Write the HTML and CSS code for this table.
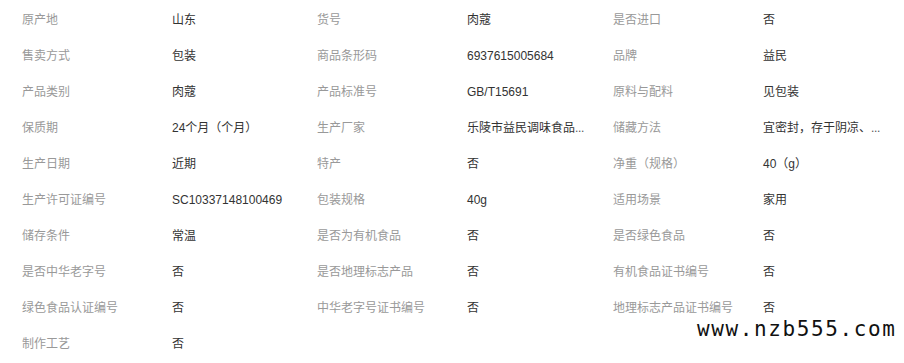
FILE: index.html
```html
<!DOCTYPE html>
<html lang="zh-CN">
<head>
<meta charset="utf-8">
<title>产品参数</title>
<link rel="stylesheet" href="styles.css">
</head>
<body>
<div class="params">
  <span class="k">原产地</span><span class="v">山东</span>
  <span class="k">货号</span><span class="v">肉蔻</span>
  <span class="k">是否进口</span><span class="v">否</span>

  <span class="k">售卖方式</span><span class="v">包装</span>
  <span class="k">商品条形码</span><span class="v">6937615005684</span>
  <span class="k">品牌</span><span class="v">益民</span>

  <span class="k">产品类别</span><span class="v">肉蔻</span>
  <span class="k">产品标准号</span><span class="v">GB/T15691</span>
  <span class="k">原料与配料</span><span class="v">见包装</span>

  <span class="k">保质期</span><span class="v">24个月（个月）</span>
  <span class="k">生产厂家</span><span class="v" title="乐陵市益民调味食品有限公司">乐陵市益民调味食品<span class="dots">...</span></span>
  <span class="k">储藏方法</span><span class="v" title="宜密封，存于阴凉、干燥处">宜密封，存于阴凉、<span class="dots">...</span></span>

  <span class="k">生产日期</span><span class="v">近期</span>
  <span class="k">特产</span><span class="v">否</span>
  <span class="k">净重（规格）</span><span class="v">40（g）</span>

  <span class="k">生产许可证编号</span><span class="v">SC10337148100469</span>
  <span class="k">包装规格</span><span class="v">40g</span>
  <span class="k">适用场景</span><span class="v">家用</span>

  <span class="k">储存条件</span><span class="v">常温</span>
  <span class="k">是否为有机食品</span><span class="v">否</span>
  <span class="k">是否绿色食品</span><span class="v">否</span>

  <span class="k">是否中华老字号</span><span class="v">否</span>
  <span class="k">是否地理标志产品</span><span class="v">否</span>
  <span class="k">有机食品证书编号</span><span class="v">否</span>

  <span class="k">绿色食品认证编号</span><span class="v">否</span>
  <span class="k">中华老字号证书编号</span><span class="v">否</span>
  <span class="k">地理标志产品证书编号</span><span class="v">否</span>

  <span class="k">制作工艺</span><span class="v">否</span>
</div>
<div class="watermark">www.nzb555.com</div>
</body>
</html>
```
FILE: styles.css
```css
html, body {
  margin: 0;
  padding: 0;
  background: #fff;
}

body {
  font-family: "Liberation Sans", "Noto Sans CJK SC", sans-serif;
  font-size: 12px;
  width: 904px;
  height: 363px;
  overflow: hidden;
  position: relative;
}

.params {
  display: grid;
  grid-template-columns: 150px 145px 150px 146px 150px 1fr;
  grid-auto-rows: 36px;
  padding: 2px 0 0 22px;
}

.k,
.v {
  line-height: 36px;
  white-space: nowrap;
}

.k {
  color: #999;
}

.v {
  color: #333;
}

.dots {
  color: #555;
  letter-spacing: -0.3px;
}

.watermark {
  position: absolute;
  left: 697px;
  top: 319px;
  font-family: "DejaVu Sans Mono", monospace;
  font-size: 21px;
  line-height: 1;
  letter-spacing: 1.6px;
  color: #111;
}
```
